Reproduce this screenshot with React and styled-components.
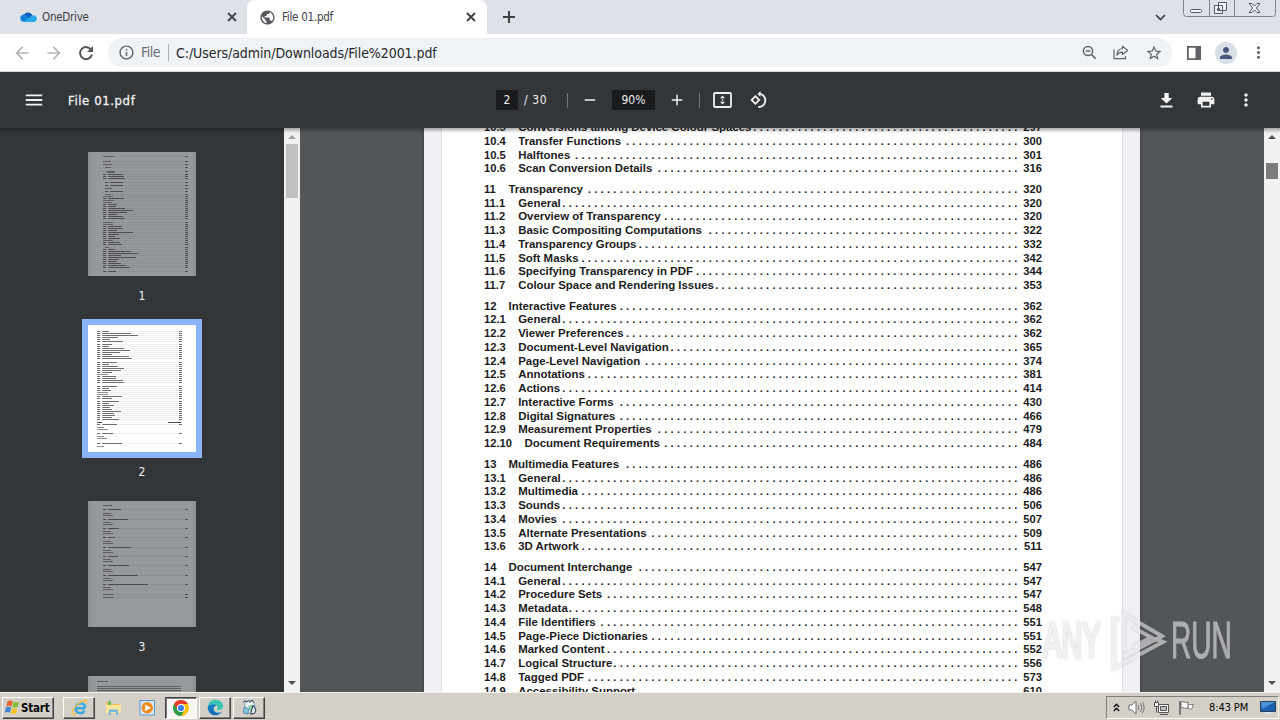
import React from "react";
import styled, { createGlobalStyle } from "styled-components";
import {
  MdArrowBack,
  MdArrowForward,
  MdInfoOutline,
  MdAdd,
  MdRemove,
  MdStarBorder,
  MdMoreVert,
  MdMenu,
  MdPrint,
  MdPublic,
  MdPerson,
} from "react-icons/md";

const contents = [
  { rows: [
    ["10.3", "Conversions among Device Colour Spaces", 42, "297"],
    ["10.4", "Transfer Functions", 62, "300"],
    ["10.5", "Halftones", 70, "301"],
    ["10.6", "Scan Conversion Details", 57, "316"],
  ] },
  { rows: [
    ["11", "Transparency", 68, "320"],
    ["11.1", "General", 72, "320"],
    ["11.2", "Overview of Transparency", 56, "320"],
    ["11.3", "Basic Compositing Computations", 49, "322"],
    ["11.4", "Transparency Groups", 60, "332"],
    ["11.5", "Soft Masks", 69, "342"],
    ["11.6", "Specifying Transparency in PDF", 51, "344"],
    ["11.7", "Colour Space and Rendering Issues", 48, "353"],
  ] },
  { rows: [
    ["12", "Interactive Features", 63, "362"],
    ["12.1", "General", 72, "362"],
    ["12.2", "Viewer Preferences", 62, "362"],
    ["12.3", "Document-Level Navigation", 55, "365"],
    ["12.4", "Page-Level Navigation", 59, "374"],
    ["12.5", "Annotations", 68, "381"],
    ["12.6", "Actions", 72, "414"],
    ["12.7", "Interactive Forms", 63, "430"],
    ["12.8", "Digital Signatures", 63, "466"],
    ["12.9", "Measurement Properties", 57, "479"],
    ["12.10", "Document Requirements", 56, "484"],
  ] },
  { rows: [
    ["13", "Multimedia Features", 62, "486"],
    ["13.1", "General", 72, "486"],
    ["13.2", "Multimedia", 69, "486"],
    ["13.3", "Sounds", 72, "506"],
    ["13.4", "Movies", 72, "507"],
    ["13.5", "Alternate Presentations", 58, "509"],
    ["13.6", "3D Artwork", 69, "511"],
  ] },
  { rows: [
    ["14", "Document Interchange", 60, "547"],
    ["14.1", "General", 72, "547"],
    ["14.2", "Procedure Sets", 65, "547"],
    ["14.3", "Metadata", 71, "548"],
    ["14.4", "File Identifiers", 66, "551"],
    ["14.5", "Page-Piece Dictionaries", 58, "551"],
    ["14.6", "Marked Content", 65, "552"],
    ["14.7", "Logical Structure", 64, "556"],
    ["14.8", "Tagged PDF", 68, "573"],
    ["14.9", "Accessibility Support", 60, "610"],
  ] },
];

// [y, indent, length, hasPageNumber]
const firstPage = [
  [4, 15, 11, 1], [9.5, 15, 8, 1], [12.5, 15, 9, 1], [15.5, 17, 6, 1],
  [19, 18, 9, 1], [20.7, 19, 8, 0], [22.6, 15, 20, 1], [24.5, 15, 21, 1], [26.5, 15, 22, 1],
  [30, 17, 18, 1], [33, 17, 18, 1], [36, 17, 7, 1], [39, 17, 18, 1],
  [42.5, 17, 6, 1], [44.5, 15, 10, 1], [46.3, 15, 21, 1], [48.3, 15, 11, 1], [50.2, 15, 9, 1],
  [52.2, 15, 14, 1], [54.2, 15, 13, 1], [56.2, 15, 22, 1], [58.2, 15, 30, 1], [60.2, 15, 24, 1],
  [62.3, 15, 14, 1], [64.5, 15, 20, 1], [66.5, 15, 22, 1],
  [70, 15, 10, 1], [72, 15, 10, 1], [74, 15, 19, 1], [76, 15, 20, 1], [78, 15, 14, 1],
  [80, 15, 30, 1], [82, 15, 16, 1], [84, 15, 12, 1], [86, 15, 17, 1], [88, 15, 10, 1],
  [90, 15, 17, 1], [92, 15, 19, 1], [95.5, 17, 4, 1], [97.5, 15, 12, 1], [99.5, 15, 28, 1],
  [101.5, 15, 35, 1], [103.5, 15, 18, 1], [105.5, 15, 33, 1], [107.5, 15, 16, 1],
  [109.5, 15, 14, 1], [111.5, 15, 18, 1], [113.5, 15, 23, 1], [115.5, 15, 27, 1], [119, 15, 13, 1],
];
const secondPage = [
  [6, 9, 12, 1], [8, 9, 34, 1], [10, 9, 41, 1], [12, 9, 21, 1], [14, 9, 13, 1], [16, 9, 26, 1],
  [19.5, 9, 15, 1], [21.5, 9, 12, 1], [23.5, 9, 27, 1], [25.5, 9, 33, 1], [27.5, 9, 23, 1],
  [29.5, 9, 15, 1], [31.5, 9, 32, 1], [33.5, 9, 35, 1],
  [37, 9, 20, 1], [39, 9, 12, 1], [41, 9, 21, 1], [43, 9, 27, 1], [45, 9, 24, 1], [47, 9, 15, 1],
  [49, 9, 11, 1], [51, 9, 19, 1], [53, 9, 19, 1], [55, 9, 26, 1], [57, 9, 27, 1],
  [61, 9, 20, 1], [63, 9, 12, 1], [65, 9, 14, 1], [67, 9, 11, 1], [69, 9, 11, 1], [71, 9, 25, 1], [73, 9, 15, 1],
  [76.5, 9, 22, 1], [78.5, 9, 12, 1], [80.5, 9, 17, 1], [82.5, 9, 13, 1], [84.5, 9, 15, 1],
  [86.5, 9, 24, 1], [88.5, 9, 17, 1], [90.5, 9, 18, 1], [92.5, 9, 15, 1], [94.5, 9, 22, 1],
  [99.5, 9, 20, 1], [102.5, 9, 7, 0], [104.5, 9, 11, 0], [108.5, 9, 16, 1],
  [111.5, 9, 7, 0], [113.5, 9, 10, 0], [118, 9, 25, 1], [121, 9, 7, 0],
];
const thirdPage = [[4.5, 15, 9, 0]];
[18, 25, 16, 12, 28, 15, 26, 35, 45].forEach((length, i) => {
  const y = 8.7 + i * 9.35;
  thirdPage.push([y, 15, length, 1], [y + 3.3, 15, 8, 0], [y + 5.3, 15, 10, 0]);
});
thirdPage.push([93, 15, 11, 1], [96, 15, 11, 1]);
const fourthPage = [[5.5, 9, 11, 0], [10.5, 9, 84, 0], [12.3, 9, 84, 0], [14.3, 9, 84, 0]];

const CloudIcon = () => (
  <svg width="17" height="12" viewBox="0 0 17 12">
    <path d="M4 3.5A5 5 0 0 1 12.6 4.6L9 8 2 6Z" fill="#0a5fb8" />
    <path d="M.4 8.2A3.7 3.7 0 0 1 5.8 4L15 10.8H4A3.5 3.5 0 0 1 .4 8.2Z" fill="#1280d8" />
    <path d="M8.7 7 12 4.5a3.5 3.5 0 0 1 4.8 3.3c0 1.8-1.3 3.2-3 3.2H3.4Z" fill="#29a8ea" />
  </svg>
);

const CloseIcon = () => (
  <svg width="14" height="14" viewBox="0 0 14 14" fill="none" stroke="#3c4043" strokeWidth="1.8">
    <path d="M3 3l8 8M11 3l-8 8" />
  </svg>
);

const PlusIcon = () => (
  <svg width="18" height="18" viewBox="0 0 18 18" fill="none" stroke="#3c4043" strokeWidth="2">
    <path d="M9 3v12M3 9h12" />
  </svg>
);

const ReloadIcon = () => (
  <svg width="20" height="20" viewBox="0 0 20 20" fill="none" stroke="#54585c" strokeWidth="2">
    <path d="M15.3 7.2A6 6 0 1 0 15.9 11.500" />
    <path d="M17 3v6h-6z" fill="#54585c" stroke="none" />
  </svg>
);

const ZoomOutIcon = () => (
  <svg width="15" height="15" viewBox="0 0 15 15" fill="none" stroke="#5f6368" strokeWidth="1.5">
    <circle cx="6" cy="6" r="4.6" />
    <path d="M9.5 9.5 13.6 13.6M3.8 6h4.4" />
  </svg>
);

const ShareIcon = () => (
  <svg width="16" height="15" viewBox="0 0 16 15" fill="none" stroke="#5f6368" strokeWidth="1.2">
    <path d="M1 4.5V13.6h11.5V11" />
    <path d="M9.5 1.3 14.7 5.4 9.5 9.4V7.1C6.7 7 5 8.2 3.9 10.2 4.1 6.4 6 3.8 9.5 3.5Z" strokeLinejoin="round" />
  </svg>
);

const PanelIcon = () => (
  <svg width="14" height="14" viewBox="0 0 14 14">
    <path d="M0 0h14v14H0zM1.8 1.8v10.4h6.7V1.8z" fill="#5f6368" fillRule="evenodd" />
  </svg>
);

const FitIcon = () => (
  <svg width="19" height="16" viewBox="0 0 19 16">
    <rect x="1" y="1" width="17" height="14" rx="1" fill="none" stroke="#f1f1f1" strokeWidth="1.8" />
    <path d="M9.5 3.4 12 6.3H7zM9.5 12.6 12 9.7H7zM8.8 7.3h1.4v1.4H8.8z" fill="#f1f1f1" />
  </svg>
);

const RotateIcon = () => (
  <svg width="18" height="18" viewBox="0 0 18 18" fill="none" stroke="#f1f1f1" strokeWidth="1.8">
    <path d="M5.4 5.2 9.2 9 5.4 12.8 1.6 9Z" />
    <path d="M9 2.7A6.6 6.6 0 1 1 8.3 16" />
    <path d="M10.5 0 7.4 2.9 10.5 5.8Z" fill="#f1f1f1" stroke="none" />
  </svg>
);

const DownloadIcon = () => (
  <svg width="13" height="15" viewBox="0 0 13 15" fill="#f1f1f1">
    <path d="M4.3 0h4.4v5h3.6L6.5 10.6.7 5h3.6zM.5 12.6h12v1.9H.5z" />
  </svg>
);

const WindowsIcon = () => (
  <svg width="17" height="17" viewBox="0 0 17 17">
    <path d="M3.6 2.2C5.3 1 7 1.2 8.6 2.3L7.4 7.6C5.6 6.6 4.1 6.6 2.4 7.4Z" fill="#e8602c" />
    <path d="M9.5 2.8c1.8 1 3.5 1 5.6 0L13.7 8c-1.9 1-3.7 1-5.4.1Z" fill="#84bc3c" />
    <path d="M2.1 8.4c1.7-.9 3.3-.8 5 .2L5.9 13.7C4.2 12.7 2.6 12.7.8 13.5Z" fill="#3e86cf" />
    <path d="M8 9.1c1.8 1 3.5 1 5.5.1L12.1 14.4c-2 1-3.7.9-5.4-.1Z" fill="#f6c531" />
  </svg>
);

const ExplorerIcon = () => (
  <svg width="19" height="17" viewBox="0 0 19 17" fill="none">
    <path d="M15.2 9.2H6.2M14.6 11.7C11.8 16 5.2 14.3 5.5 8.7 5.8 3.5 14.8 2.3 15.3 9" stroke="#36a9e3" strokeWidth="2.5" />
    <path d="M15.7 4.5C18.7-.5 13.5.8 8.2 5 2.8 9.2.3 15 3 15.5c1.1.2 2.7-.5 4-1.5" stroke="#f3c143" strokeWidth="1.5" />
  </svg>
);

const FolderIcon = () => (
  <svg width="17" height="16" viewBox="0 0 17 16">
    <path d="M1 2h5l1 2h8v9H1z" fill="#e7bd55" />
    <path d="M3 1h3v4H3z" fill="#71bd68" />
    <path d="M1 5h15v8H1z" fill="#f9e69d" />
    <path d="M4 15V9.5h9V15h-2v-3H6v3z" fill="#75b7de" />
  </svg>
);

const MediaIcon = () => (
  <svg width="17" height="16" viewBox="0 0 17 16">
    <rect x="1" y=".5" width="14.5" height="14.5" fill="#d9ebf8" stroke="#5695cc" />
    <circle cx="8.2" cy="7.8" r="5.7" fill="#f08a1d" />
    <path d="M6.2 4.4v6.8l5.6-3.4z" fill="#fff" />
  </svg>
);

const ChromeIcon = () => (
  <svg width="16" height="16" viewBox="0 0 16 16">
    <circle cx="8" cy="8" r="8" fill="#fbc116" />
    <path d="M8 8V4h6.9A8 8 0 0 0 1.1 4L4.5 10Z" fill="#e33b2e" />
    <path d="M1.1 4A8 8 0 0 0 8 16l3.5-6H4.5Z" fill="#269b4b" />
    <circle cx="8" cy="8" r="4" fill="#fff" />
    <circle cx="8" cy="8" r="3" fill="#3d7ce8" />
  </svg>
);

const EdgeIcon = () => (
  <svg width="17" height="17" viewBox="0 0 17 17">
    <path d="M.7 8C1 3.3 4.3.7 8.5.7c4.7 0 7.7 3 7.7 6.4 0 3.6-3.8 4.8-6 3.7-1-.6.6-1 .4-2.6C10.2 5.2 3.2 4.3.7 8Z" fill="#3bc3b4" />
    <path d="M.7 8C3 4.3 8.4 4.5 9.3 7 5.5 7 5.6 13.5 11.8 13.7c1.4 0 2.3-.3 3.4-.9-3.3 5.1-14.5 5.2-14.5-4.8Z" fill="#1679c4" />
    <path d="M5.2 8.2C3.6 12 7.4 16.5 12 15.4 7.5 17.8 2.2 13.7 5.2 8.2Z" fill="#0e58a0" />
  </svg>
);

const NotebookIcon = () => (
  <svg width="18" height="17" viewBox="0 0 18 17">
    <path d="M4.5 2 13 1.5 15.5 9 13 15 6 14Z" fill="#eef5f9" stroke="#8aa4b8" />
    <path d="M3 3.5l2-2 1.5 2 2-2 1.5 2L12 1l1.5 2.5" fill="none" stroke="#33425a" />
    <path d="M4 8.5l4.5 1-.5 5.5-4.5-1z" fill="#8ccbd8" stroke="#4b88b5" />
    <path d="M8 7l4-1 1 4-3 3z" fill="#8bc9a3" />
    <path d="M13 6l3 5-1.5 3.5-4 .5z" fill="#dfe9f4" stroke="#27354d" />
  </svg>
);

const SpeakerIcon = () => (
  <svg width="17" height="15" viewBox="0 0 17 15" fill="#fff" stroke="#6f6f6f">
    <path d="M1 5h3l4-4v13l-4-4H1z" />
    <path d="M10 5c1 1.5 1 3.5 0 5M12.2 3.2c2 2.7 2 5.9 0 8.6M14.4 2c2.2 3.5 2.2 7.5 0 11" fill="none" />
  </svg>
);

const NetworkIcon = () => (
  <svg width="17" height="16" viewBox="0 0 17 16" fill="#f4f4f2" stroke="#555">
    <path d="M5.5 4.5h10v8h-10z" />
    <path d="M7.5 6.5h6v4h-6z" fill="#bdbdb8" />
    <path d="M1.5 2.5h4v4h-4zM2.5.5v2M4.5.5v2M3.5 6.5v6M7 14.5h8" />
  </svg>
);

const FlagIcon = () => (
  <svg width="17" height="16" viewBox="0 0 17 16" fill="#fff" stroke="#777">
    <path d="M10 4c2 1 3.5.8 5.5.2L13.8 8.7c-1.6.8-2.8.2-3.8-.4z" />
    <path d="M1.5 1.5h1v13h-1zM3 2c3-1.2 4 1.2 7 .3v6c-3 .9-4-1.5-7-.3z" />
  </svg>
);

const MonitorIcon = () => (
  <svg width="16" height="14" viewBox="0 0 16 14">
    <path d="M.5.5h15v10H.5z" fill="#1c5fae" stroke="#28405e" />
    <path d="M1 1h14L2 8z" fill="#4b95dc" />
    <path d="M5 11h6v2H5z" fill="#dce4ec" />
  </svg>
);

const Thumbnail = ({ height, lines, page, selected, numbersAt = 97 }) => (
  <>
    <Thumb $height={height} $selected={selected}>
      <svg width="108" height={height} viewBox={`0 0 108 ${height}`}>
        {lines.map(([top, x, length, numbered], i) => {
          // keep every line on the pixel grid
          const y = Math.floor(top) + 0.5;
          return (
            <g key={i} stroke="#222">
              {length > 11 && length < 80 ? (
                <path d={`M${x} ${y}h3.2m2 0h${length - 5.2}`} opacity=".65" />
              ) : (
                <path d={`M${x} ${y}h${length}`} opacity=".5" />
              )}
              {numbered ? (
                <>
                  <path d={`M${x + length + 1} ${y}H${numbersAt - 1}`} opacity=".07" />
                  <path d={`M${numbersAt} ${y}h3`} opacity=".65" />
                </>
              ) : null}
            </g>
          );
        })}
        {selected && <path d="M9 97.5h5M80 97.5h13" stroke="#222" opacity=".8" />}
      </svg>
    </Thumb>
    {page && <ThumbLabel>{page}</ThumbLabel>}
  </>
);

const App = () => {
  return (
    <Screen>
      <GlobalStyle />
      <TabStrip>
        <Tab $width={247}>
          <CloudIcon />
          <TabTitle>OneDrive</TabTitle>
          <CloseIcon />
        </Tab>
        <Tab $width={240} $active>
          <MdPublic size={17} color="#55585c" />
          <TabTitle>File 01.pdf</TabTitle>
          <CloseIcon />
        </Tab>
        <NewTab>
          <PlusIcon />
        </NewTab>
        <TabSearch>
          <svg width="11" height="7" viewBox="0 0 11 7" fill="none" stroke="#3c4043" strokeWidth="1.7">
            <path d="M1 1l4.5 4.5L10 1" />
          </svg>
        </TabSearch>
        <WindowControls>
          <svg width="93" height="17" viewBox="0 0 93 17" fill="none" stroke="#7d828c">
            <path d="M.5 0v13.5q0 3 3 3h86q3 0 3-3V0M26.5 0v16M51.5 0v16" />
            <rect x="7.5" y="9.5" width="11" height="3" rx="1" fill="#f4f5f7" stroke="#555b66" />
            <path d="M35.5 2.5h8v8h-8zM31.5 5.5h8v8h-8zM34.5 8.5h2v2h-2z" fill="#f4f5f7" stroke="#555b66" />
            <path d="M66 3.5h3l2.5 2.6L74 3.5h3L73.3 8l3.7 4.5h-3l-2.5-2.6L69 12.5h-3L69.7 8z" fill="#f4f5f7" stroke="#555b66" />
          </svg>
        </WindowControls>
      </TabStrip>

      <AddressBar>
        <NavButtons>
          <MdArrowBack size={20} color="#b4b7ba" />
          <MdArrowForward size={20} color="#b4b7ba" />
          <ReloadIcon />
        </NavButtons>
        <Omnibox>
          <MdInfoOutline size={17} color="#5f6368" />
          <Scheme>File</Scheme>
          <Url>C:/Users/admin/Downloads/File%2001.pdf</Url>
          <OmniboxActions>
            <ZoomOutIcon />
            <ShareIcon />
            <MdStarBorder size={18} color="#5f6368" />
          </OmniboxActions>
        </Omnibox>
        <BrowserActions>
          <PanelIcon />
          <Avatar>
            <MdPerson size={18} color="#48577c" />
          </Avatar>
          <MdMoreVert size={19} color="#5f6368" />
        </BrowserActions>
      </AddressBar>

      <ViewerBar>
        <ViewerSide>
          <MdMenu size={22} />
          <FileName>File 01.pdf</FileName>
        </ViewerSide>
        <ViewerCenter>
          <Field $width={22}>2</Field>
          <PageCount>/ 30</PageCount>
          <Separator />
          <MdRemove size={18} />
          <Field $width={43}>90%</Field>
          <MdAdd size={18} />
          <Separator />
          <FitIcon />
          <RotateIcon />
        </ViewerCenter>
        <ViewerActions>
          <DownloadIcon />
          <MdPrint size={20} />
          <MdMoreVert size={20} />
        </ViewerActions>
      </ViewerBar>

      <Viewer>
        <Sidebar>
          <Thumbnail page="1" height={124} lines={firstPage} />
          <Thumbnail page="2" height={127} lines={secondPage} numbersAt={91} selected />
          <Thumbnail page="3" height={126} lines={thirdPage} />
          <Thumbnail height={126} lines={fourthPage} />
        </Sidebar>
        <Scrollbar>
          <Arrow $color="#a3a3a3" />
          <ScrollThumb $offset={0} $size={54} $color="#c1c1c1" />
          <Arrow $down $color="#505050" />
        </Scrollbar>
        <Canvas>
          <Page>
            <Paper>
              {contents.map((chapter) => (
                <Chapter key={chapter.rows[0][0]}>
                  {chapter.rows.map(([number, title, dots, page]) => (
                    <Entry key={number}>
                      <EntryNumber $chapter={!number.includes(".")} $wide={number.length > 4}>
                        {number}
                      </EntryNumber>
                      <Title>{title}</Title>
                      <Leader>
                        <span>{".".repeat(dots)}</span>
                      </Leader>
                      <PageNumber>{page}</PageNumber>
                    </Entry>
                  ))}
                </Chapter>
              ))}
            </Paper>
          </Page>
        </Canvas>
        <Scrollbar>
          <Arrow $color="#505050" />
          <ScrollThumb $offset={19} $size={16} $color="#7b7b7b" />
          <Arrow $down $color="#505050" />
        </Scrollbar>
        <ViewerShade />
        <Watermark>
          <Brand $width={66}><span>ANY</span></Brand>
          <svg width="62" height="64" viewBox="0 0 62 64" fill="none" stroke="#e9e9eb" strokeWidth="4">
            <path d="M15 42V5L53 27 47 31 23 18" />
            <path d="M10 10H5V59L54 33 47 30 14 48M24 38l17-9" />
          </svg>
          <Brand $width={60}><span>RUN</span></Brand>
        </Watermark>
      </Viewer>

      <Taskbar>
        <StartButton>
          <WindowsIcon />
          Start
        </StartButton>
        <TaskButton $raised><ExplorerIcon /></TaskButton>
        <TaskButton><FolderIcon /></TaskButton>
        <TaskButton><MediaIcon /></TaskButton>
        <TaskButton $pressed><ChromeIcon /></TaskButton>
        <TaskButton $raised><EdgeIcon /></TaskButton>
        <TaskButton $raised><NotebookIcon /></TaskButton>
        <Tray>
          <svg width="7" height="9" viewBox="0 0 7 9" fill="none" stroke="#111" strokeWidth="1.4">
            <path d="M.8 4l2.7-2.7L6.2 4M.8 8l2.7-2.7L6.2 8" />
          </svg>
          <SpeakerIcon />
          <NetworkIcon />
          <FlagIcon />
          <Clock>8:43 PM</Clock>
          <MonitorIcon />
        </Tray>
      </Taskbar>
    </Screen>
  );
};

const GlobalStyle = createGlobalStyle`
  * {
    box-sizing: border-box;
  }
  body {
    margin: 0;
    overflow: hidden;
    font-family: "DejaVu Sans Condensed", "Noto Sans", sans-serif;
  }
  svg {
    display: block;
    flex-shrink: 0;
  }
`;

const Screen = styled.div`
  display: grid;
  grid-template-rows: 34px 38px 56px 564px 28px;
  width: 1280px;
  height: 720px;
`;

const TabStrip = styled.div`
  display: flex;
  background: #dee1e8;
`;

const Tab = styled.div`
  display: flex;
  align-items: center;
  width: ${(p) => p.$width}px;
  padding: ${(p) => (p.$active ? "0 9px 0 12px" : "0 8px 0 20px")};
  gap: ${(p) => (p.$active ? 6 : 5)}px;
  border-radius: 8px 8px 0 0;
  background: ${(p) => (p.$active ? "#fff" : "transparent")};
`;

const TabTitle = styled.span`
  flex: 1;
  color: #3c4043;
  font-size: 11.5px;
  letter-spacing: -0.25px;
`;

const NewTab = styled.div`
  display: flex;
  align-items: center;
  padding-left: 13px;
`;

const TabSearch = styled.div`
  display: flex;
  align-items: center;
  margin-left: auto;
  padding-right: 17px;
`;

const WindowControls = styled.div`
  padding-right: 4px;
`;

const AddressBar = styled.div`
  display: flex;
  align-items: center;
  background: #fff;
  border-bottom: 1px solid #d9dbde;
`;

const NavButtons = styled.div`
  display: flex;
  width: 108px;
  padding-left: 12px;
  gap: 12px;
`;

const Omnibox = styled.div`
  display: flex;
  align-items: center;
  width: 1064px;
  height: 29px;
  padding: 0 9px 0 10px;
  border-radius: 15px;
  background: #f0f3f6;
  font-size: 14px;
`;

const Scheme = styled.span`
  margin-left: 6px;
  padding-right: 8px;
  border-right: 1px solid #a9adb1;
  color: #686c70;
  line-height: 17px;
  letter-spacing: -0.5px;
`;

const Url = styled.span`
  margin-left: 7px;
  color: #26282b;
  letter-spacing: -0.07px;
`;

const OmniboxActions = styled.div`
  display: flex;
  align-items: center;
  margin-left: auto;
  gap: 16px;
`;

const BrowserActions = styled.div`
  display: flex;
  align-items: center;
  padding-left: 15px;
  gap: 14px;
  & > svg:last-child {
    margin-left: -2px;
  }
`;

const Avatar = styled.div`
  display: flex;
  align-items: center;
  justify-content: center;
  width: 22px;
  height: 22px;
  border-radius: 50%;
  background: #d9dfe8;
`;

const ViewerBar = styled.div`
  display: grid;
  grid-template-columns: 496px 1fr auto;
  align-items: center;
  background: #323639;
  color: #f1f1f1;
`;

const ViewerSide = styled.div`
  display: flex;
  align-items: center;
  padding-left: 23px;
`;

const FileName = styled.span`
  margin-left: 23px;
  font-size: 13px;
  letter-spacing: 0.6px;
  -webkit-text-stroke: 0.3px #f1f1f1;
`;

const ViewerCenter = styled.div`
  display: flex;
  align-items: center;
  font-size: 12px;
  & > ${() => Separator} + svg {
    margin-left: 13px;
  }
  & > svg + svg {
    margin-left: 18px;
  }
`;

const Field = styled.span`
  width: ${(p) => p.$width}px;
  height: 20px;
  line-height: 20px;
  background: #191b1d;
  text-align: center;
  svg + & {
    margin: 0 13px;
  }
`;

const PageCount = styled.span`
  width: 43px;
  padding-left: 6px;
  margin-right: 6px;
  letter-spacing: 0.6px;
`;

const Separator = styled.span`
  width: 1px;
  height: 15px;
  background: #74787b;
  svg + & {
    margin-left: 13px;
  }
`;

const ViewerActions = styled.div`
  display: flex;
  align-items: center;
  padding-right: 24px;
  gap: 23px;
  & > svg:last-child {
    margin-left: -3px;
  }
`;

const Viewer = styled.div`
  position: relative;
  display: flex;
  overflow: hidden;
`;

const ViewerShade = styled.div`
  position: absolute;
  top: 0;
  left: 0;
  width: 100%;
  height: 5px;
  background: linear-gradient(rgba(0, 0, 0, 0.32), transparent);
`;

const Sidebar = styled.div`
  display: flex;
  flex-direction: column;
  align-items: center;
  width: 284px;
  padding-top: 24px;
  background: #323639;
`;

const Thumb = styled.div`
  flex-shrink: 0;
  width: 108px;
  height: ${(p) => p.$height}px;
  background: ${(p) => (p.$selected ? "#fff" : "#95999c")};
  box-shadow: ${(p) =>
    p.$selected ? "0 0 0 6px #8ab4f8" : "inset 3px 0 #8d9194, inset -3px 0 #8d9194"};
`;

const ThumbLabel = styled.div`
  flex-shrink: 0;
  margin-bottom: 9px;
  color: #f1f1f1;
  font-size: 12px;
  line-height: 40px;
`;

const Scrollbar = styled.div`
  display: flex;
  flex-direction: column;
  align-items: center;
  width: 16px;
  background: #f1f1f1;
`;

const Arrow = styled.span`
  width: 8px;
  height: 4px;
  margin: ${(p) => (p.$down ? "auto 0 7px" : "7px 0 5px")};
  background: ${(p) => p.$color};
  clip-path: ${(p) => (p.$down ? "polygon(0 0, 100% 0, 50% 100%)" : "polygon(0 100%, 100% 100%, 50% 0)")};
`;

const ScrollThumb = styled.span`
  width: 12px;
  height: ${(p) => p.$size}px;
  margin-top: ${(p) => p.$offset}px;
  background: ${(p) => p.$color};
`;

const Canvas = styled.div`
  display: flex;
  justify-content: center;
  width: 964px;
  background: #525659;
`;

const Page = styled.div`
  width: 716px;
  padding: 0 18px;
  background: #f0f0f6;
  box-shadow: 0 0 3px rgba(0, 0, 0, 0.4);
`;

const Paper = styled.div`
  height: 564px;
  padding: 0 80px 0 42px;
  overflow: hidden;
  background: #fff;
  box-shadow: 0 0 2px #bfc0c8;
  font-family: "Liberation Sans", Arial, sans-serif;
  font-size: 11.2px;
  font-weight: bold;
  color: #1c1c1c;
`;

const Chapter = styled.div`
  margin-bottom: 6.85px;
  &:first-child {
    margin-top: -7px;
  }
`;

const Entry = styled.div`
  display: flex;
  height: 13.75px;
  line-height: 13.75px;
  white-space: nowrap;
`;

const EntryNumber = styled.span`
  flex-shrink: 0;
  width: ${(p) => (p.$chapter ? 24.5 : p.$wide ? 40.5 : 34.2)}px;
`;

const Title = styled.span`
  font-size: 11.45px;
`;

const Leader = styled.span`
  display: flex;
  flex: 1;
  justify-content: flex-end;
  min-width: 0;
  font-size: 11px;
  letter-spacing: 3.31px;
`;

const PageNumber = styled.span`
  width: 19px;
  margin-left: 2.3px;
  text-align: right;
`;

const Watermark = styled.div`
  position: absolute;
  right: 49px;
  bottom: 19px;
  display: flex;
  align-items: center;
  opacity: 0.6;
  filter: drop-shadow(0 0 1px rgba(80, 80, 80, 0.45));
`;

const Brand = styled.div`
  width: ${(p) => p.$width}px;
  color: #e8e8ea;
  font: 51px/64px "Liberation Sans", Arial, sans-serif;
  -webkit-text-stroke: 1.2px #e8e8ea;
  & > span {
    display: inline-block;
    transform: scaleX(0.55);
    transform-origin: left;
  }
`;

const Taskbar = styled.div`
  display: flex;
  align-items: center;
  padding: 2px 0 0 2px;
  border-top: 1px solid #f3f1ec;
  background: #d4d0c8;
`;

const StartButton = styled.div`
  display: flex;
  align-items: center;
  width: 52px;
  height: 22px;
  margin-right: 9px;
  padding-left: 1px;
  border: 1px solid;
  border-color: #fff #404040 #404040 #fff;
  box-shadow: inset -1px -1px #808080;
  font-size: 11.5px;
  font-weight: bold;
  letter-spacing: -0.2px;
`;

const TaskButton = styled.div`
  display: flex;
  align-items: center;
  justify-content: center;
  width: 32px;
  height: 22px;
  margin-right: 2px;
  border: 1px solid transparent;
  ${(p) => p.$raised && "border-color: #fff #404040 #404040 #fff; box-shadow: inset -1px -1px #808080;"}
  ${(p) => p.$pressed && "border-color: #404040 #fff #fff #404040; background: #f7f6f4; box-shadow: inset 1px 1px #808080;"}
`;

const Tray = styled.div`
  display: flex;
  align-items: center;
  width: 173px;
  height: 23px;
  margin-left: auto;
  margin-right: 1px;
  padding-left: 6px;
  gap: 8px;
  border: 1px solid;
  border-color: #808080 #fff #fff #808080;
`;

const Clock = styled.span`
  margin-left: 6px;
  width: 43px;
  font-size: 11px;
  letter-spacing: -0.1px;
  white-space: nowrap;
`;

export default App;
